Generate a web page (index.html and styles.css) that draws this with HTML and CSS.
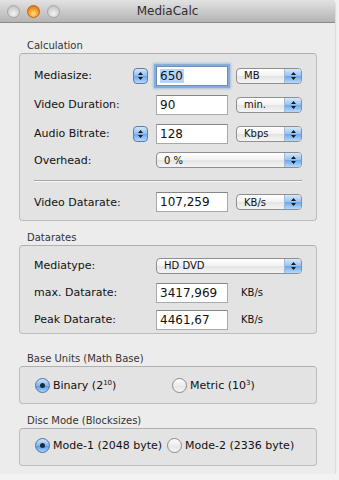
FILE: index.html
```html
<!DOCTYPE html>
<html lang="en">
<head>
    <meta charset="UTF-8">
    <meta name="viewport" content="width=device-width, initial-scale=1.0">
    <title>MediaCalc</title>
    <link rel="stylesheet" href="styles.css">
</head>
<body>
    <div class="window">
        <div class="titlebar">
            <div class="lights">
                <span class="light"></span>
                <span class="light light-min"></span>
                <span class="light"></span>
            </div>
            <div class="title">MediaCalc</div>
        </div>
        <div class="content">
            <div class="group-label">Calculation</div>
            <div class="box calc">
                <div class="row">
                    <div class="label-cell"><span>Mediasize:</span><span class="stepper"><svg width="7" height="10" viewBox="0 0 7 10"><path d="M3.5 1 L6 4 L1 4 Z M3.5 9 L6 6 L1 6 Z" fill="#1a1a1a"/></svg></span></div>
                    <div class="field focused"><span class="sel">650</span></div>
                    <div class="popup"><span class="popup-text">MB</span><span class="popup-arrow"><svg width="7" height="10" viewBox="0 0 7 10"><path d="M3.5 1 L6 4 L1 4 Z M3.5 9 L6 6 L1 6 Z" fill="#1a1a1a"/></svg></span></div>
                </div>
                <div class="row">
                    <div class="label-cell"><span>Video Duration:</span></div>
                    <div class="field">90</div>
                    <div class="popup"><span class="popup-text">min.</span><span class="popup-arrow"><svg width="7" height="10" viewBox="0 0 7 10"><path d="M3.5 1 L6 4 L1 4 Z M3.5 9 L6 6 L1 6 Z" fill="#1a1a1a"/></svg></span></div>
                </div>
                <div class="row">
                    <div class="label-cell"><span>Audio Bitrate:</span><span class="stepper"><svg width="7" height="10" viewBox="0 0 7 10"><path d="M3.5 1 L6 4 L1 4 Z M3.5 9 L6 6 L1 6 Z" fill="#1a1a1a"/></svg></span></div>
                    <div class="field">128</div>
                    <div class="popup"><span class="popup-text">Kbps</span><span class="popup-arrow"><svg width="7" height="10" viewBox="0 0 7 10"><path d="M3.5 1 L6 4 L1 4 Z M3.5 9 L6 6 L1 6 Z" fill="#1a1a1a"/></svg></span></div>
                </div>
                <div class="row row-short">
                    <div class="label-cell"><span>Overhead:</span></div>
                    <div class="popup wide"><span class="popup-text">0 %</span><span class="popup-arrow"><svg width="7" height="10" viewBox="0 0 7 10"><path d="M3.5 1 L6 4 L1 4 Z M3.5 9 L6 6 L1 6 Z" fill="#1a1a1a"/></svg></span></div>
                </div>
                <div class="separator"></div>
                <div class="row row-last">
                    <div class="label-cell"><span>Video Datarate:</span></div>
                    <div class="field">107,259</div>
                    <div class="popup"><span class="popup-text">KB/s</span><span class="popup-arrow"><svg width="7" height="10" viewBox="0 0 7 10"><path d="M3.5 1 L6 4 L1 4 Z M3.5 9 L6 6 L1 6 Z" fill="#1a1a1a"/></svg></span></div>
                </div>
            </div>

            <div class="group-label">Datarates</div>
            <div class="box rates">
                <div class="row">
                    <div class="label-cell"><span>Mediatype:</span></div>
                    <div class="popup wide"><span class="popup-text">HD DVD</span><span class="popup-arrow"><svg width="7" height="10" viewBox="0 0 7 10"><path d="M3.5 1 L6 4 L1 4 Z M3.5 9 L6 6 L1 6 Z" fill="#1a1a1a"/></svg></span></div>
                </div>
                <div class="row">
                    <div class="label-cell"><span>max. Datarate:</span></div>
                    <div class="field">3417,969</div>
                    <div class="unit">KB/s</div>
                </div>
                <div class="row">
                    <div class="label-cell"><span>Peak Datarate:</span></div>
                    <div class="field">4461,67</div>
                    <div class="unit">KB/s</div>
                </div>
            </div>

            <div class="group-label group-label-base">Base Units (Math Base)</div>
            <div class="box radios">
                <label class="radio-item"><span class="radio checked"></span><span>Binary (2<sup>10</sup>)</span></label>
                <label class="radio-item"><span class="radio"></span><span>Metric (10<sup>3</sup>)</span></label>
            </div>

            <div class="group-label">Disc Mode (Blocksizes)</div>
            <div class="box radios radios-disc">
                <label class="radio-item"><span class="radio checked"></span><span>Mode-1 (2048 byte)</span></label>
                <label class="radio-item"><span class="radio"></span><span>Mode-2 (2336 byte)</span></label>
            </div>
        </div>
    </div>
</body>
</html>
```

FILE: styles.css
```css
body {
    margin: 0;
    padding: 0;
    background-color: #f2f2f2;
    font-family: "DejaVu Sans", Verdana, sans-serif;
    color: #111;
}
.window {
    width: 335px;
    height: 474px;
    background-color: #ececec;
    border-radius: 5px 5px 0 0;
    box-shadow: 0 0 2px rgba(0, 0, 0, 0.35);
    overflow: hidden;
}
.titlebar {
    height: 22px;
    background: linear-gradient(#e2e2e2, #b4b4b4);
    border-bottom: 1px solid #8a8a8a;
    display: flex;
    align-items: center;
    position: relative;
}
.lights {
    display: flex;
    gap: 7px;
    padding-left: 7px;
}
.light {
    width: 13px;
    height: 13px;
    border-radius: 50%;
    box-sizing: border-box;
    border: 1px solid #a3a3a3;
    background: radial-gradient(circle at 50% 70%, #f4f4f4, #c9c9c9 70%);
}
.light-min {
    border-color: #b8651a;
    background: radial-gradient(circle at 50% 70%, #ffe07a, #f09428 55%, #d06a10);
}
.title {
    position: absolute;
    left: 0;
    right: 0;
    text-align: center;
    font-size: 12px;
    color: #2e2e2e;
}
.content {
    padding: 17px 18px 0 19px;
}
.group-label {
    font-size: 10px;
    line-height: 12px;
    color: #333;
    padding-left: 8px;
    margin-bottom: 1px;
}
.group-label-base {
    margin-top: 19px;
}
.box {
    background-color: #e3e3e3;
    border: 1px solid #bdbdbd;
    border-top-color: #b0b0b0;
    border-radius: 4px;
    margin-bottom: 11px;
}
.calc {
    padding: 7px 14px 7px 14px;
}
.rates {
    padding: 6px 14px 0 14px;
    margin-bottom: 0;
}
.row {
    display: grid;
    grid-template-columns: 114px 72px 66px;
    column-gap: 8px;
    align-items: center;
    height: 29px;
}
.rates .row {
    height: 27px;
}
.row-short {
    height: 24px;
}
.row-last {
    height: 22px;
    margin-top: 9px;
}
.label-cell {
    display: flex;
    justify-content: space-between;
    align-items: center;
    font-size: 11px;
}
.stepper {
    width: 15px;
    height: 16px;
    box-sizing: border-box;
    border: 1px solid #5a7fae;
    border-radius: 4px;
    background: linear-gradient(#d3e6fb, #8fbdf0 50%, #6aa6ea 51%, #b6d8fb);
    display: flex;
    align-items: center;
    justify-content: center;
}
.field {
    height: 20px;
    box-sizing: border-box;
    background-color: #fff;
    border: 1px solid #a9a9a9;
    border-top-color: #868686;
    font-size: 12px;
    line-height: 18px;
    padding-left: 3px;
    white-space: nowrap;
}
.focused {
    box-shadow: 0 0 0 2px #86acdc, 0 0 2px 3px rgba(120, 160, 215, 0.5);
    border-color: #6d8fbf;
}
.sel {
    background-color: #b6d4f6;
    padding-right: 1px;
}
.popup {
    height: 16px;
    box-sizing: border-box;
    border: 1px solid #8f8f8f;
    border-radius: 4px;
    background: linear-gradient(#ffffff, #f2f2f2 50%, #e4e4e4 51%, #f4f4f4);
    display: flex;
    align-items: center;
    justify-content: space-between;
    overflow: hidden;
}
.popup.wide {
    grid-column: 2 / 4;
}
.popup-text {
    font-size: 10px;
    padding-left: 7px;
}
.popup-arrow {
    width: 16px;
    height: 100%;
    border-left: 1px solid #9fb8d6;
    background: linear-gradient(#d6e8fb, #94c2f2 50%, #6aa7ea 51%, #b8daf9);
    display: flex;
    align-items: center;
    justify-content: center;
}
.unit {
    font-size: 10px;
    padding-left: 5px;
}
.separator {
    margin-top: 8px;
    border-top: 1px solid #a4a4a4;
    border-bottom: 1px solid #f6f6f6;
}
.radios {
    display: flex;
    align-items: center;
    padding-left: 15px;
    padding-top: 1px;
    box-sizing: border-box;
    height: 38px;
}
.radios-disc {
    padding-left: 15px;
    padding-bottom: 3px;
    padding-top: 0;
}
.radio-item {
    display: flex;
    align-items: center;
    font-size: 11px;
    gap: 3px;
    width: 137px;
}
.radios-disc .radio-item {
    width: auto;
    margin-right: 5px;
}
.radio-item sup {
    font-size: 7px;
    vertical-align: 4px;
    line-height: 0;
}
.radio {
    width: 15px;
    height: 15px;
    box-sizing: border-box;
    border-radius: 50%;
    border: 1px solid #8a8a8a;
    background: linear-gradient(#ffffff, #e7e7e7 60%, #f7f7f7);
    display: inline-block;
    position: relative;
}
.radio.checked {
    border-color: #4f73a3;
    background: linear-gradient(#cfe4fb, #7db3ee 55%, #5b9fe8 56%, #a9d2fb);
}
.radio.checked::after {
    content: "";
    position: absolute;
    left: 4px;
    top: 4px;
    width: 5px;
    height: 5px;
    border-radius: 50%;
    background-color: #1b2a3c;
}
```
